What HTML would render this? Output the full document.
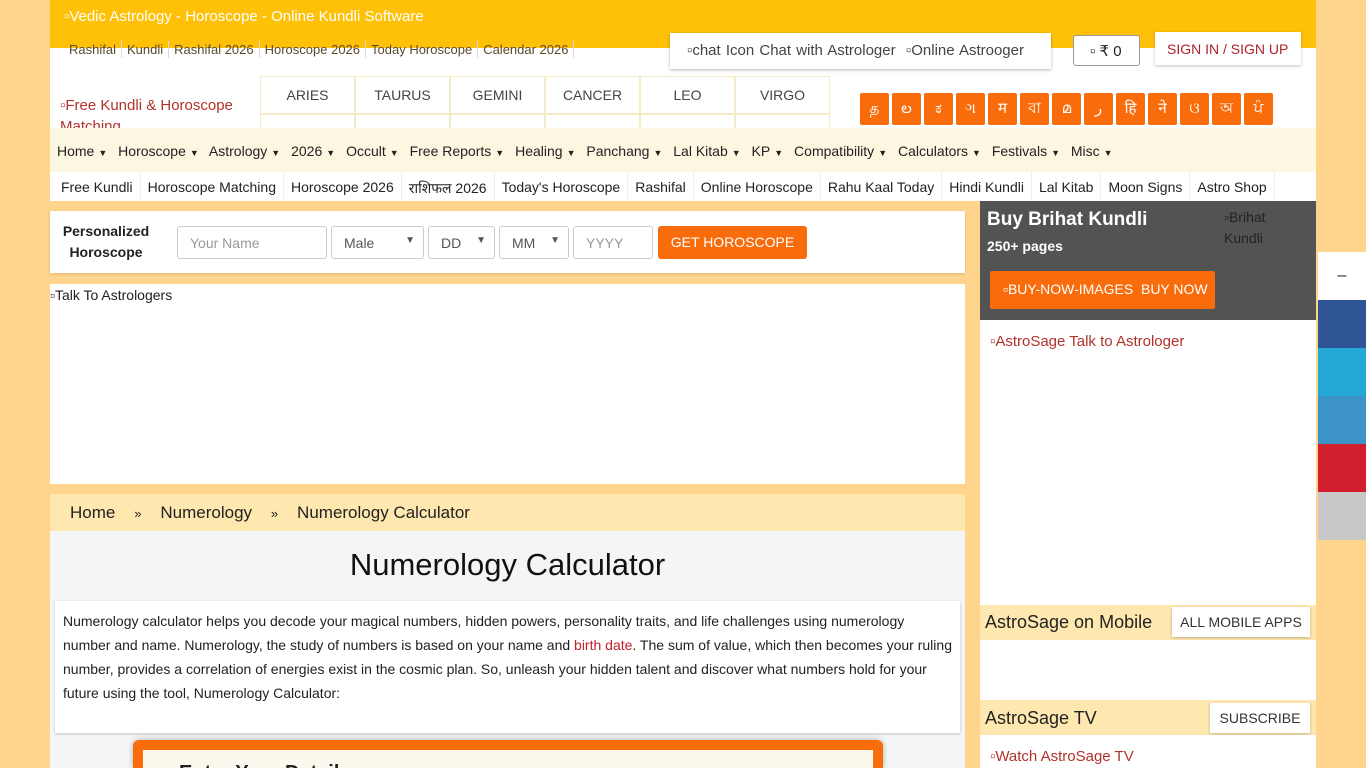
<!DOCTYPE html>
<html style="overflow:hidden;height:768px"><head><meta charset="utf-8"><style>
*{box-sizing:border-box;margin:0;padding:0}
body{width:1366px;height:768px;overflow:hidden;background:#ffd48c;font-family:"Liberation Sans","Noto Sans CJK SC",sans-serif;position:relative;color:#222}
.a{position:absolute}
.top{left:50px;top:0;width:1266px;height:48px;background:#ffc107}
.wh{left:50px;top:48px;width:1266px;height:80px;background:#fff}
.toplinks{left:64px;top:41px;font-size:13px;color:#5a4a2a;display:flex}
.toplinks span{padding:0 5px;border-right:1px solid #ddd;line-height:17px}
.chat{left:670px;top:33px;width:381px;height:36px;background:#fff;box-shadow:0 1px 3px rgba(0,0,0,.3);font-size:15px;color:#444;padding:9px 0 0 17px;white-space:nowrap;word-spacing:1px}
.wal{left:1073px;top:35px;width:67px;height:31px;border:1px solid #999;border-radius:3px;background:#fff;font-size:15px;padding:6px 0 0 16px}
.sign{left:1155px;top:32px;width:146px;height:33px;background:#fff;box-shadow:0 1px 3px rgba(0,0,0,.25);color:#b0222a;font-size:14px;padding:9px 0 0 12px}
.zod{left:260px;top:76px;width:570px;height:52px;overflow:hidden}
.zod div{float:left;width:95px;height:38px;border:1px solid #f4ecc6;text-align:center;line-height:37px;font-size:14px;color:#444}
.lang{top:93px;width:29px;height:32px;background:#f96c0c;border-radius:2px;color:#fff;text-align:center;line-height:32px;font-size:15px}
.nav{left:50px;top:128px;width:1266px;height:44px;background:#fdf6e0;font-size:14px;padding:15px 0 0 7px;white-space:nowrap;color:#222}
.nav span{margin-right:7px}
.nav i{font-style:normal;font-size:9px;margin-left:4px}
.nav2{left:50px;top:172px;width:1266px;height:29px;background:#fff;display:flex;font-size:14px;padding-left:4px}
.nav2 span{padding:7px 7px 0;border-right:1px solid #eee;white-space:nowrap}
.box{background:#fff}
.f{top:226px;height:33px;border:1px solid #ccc;border-radius:3px;background:#fff;font-size:14px;color:#999;padding:8px 0 0 12px}
</style></head><body>
<div class="a top"></div>
<div class="a wh"></div>
<div class="a" style="left:64px;top:8px;font-size:15px;color:#fff">▫Vedic Astrology - Horoscope - Online Kundli Software</div>
<div class="a toplinks"><span>Rashifal</span><span>Kundli</span><span>Rashifal 2026</span><span>Horoscope 2026</span><span>Today Horoscope</span><span>Calendar 2026</span></div>
<div class="a chat">▫chat Icon Chat with Astrologer &nbsp;▫Online Astrooger</div>
<div class="a wal">▫ ₹ 0</div>
<div class="a sign">SIGN IN / SIGN UP</div>
<div class="a" style="left:60px;top:95px;width:195px;height:33px;overflow:hidden;font-size:15px;color:#b0322a;line-height:21px">▫Free Kundli &amp; Horoscope Matching</div>
<div class="a zod"><div>ARIES</div><div>TAURUS</div><div>GEMINI</div><div>CANCER</div><div>LEO</div><div>VIRGO</div><div>LIBRA</div><div>SCORPIO</div><div>SAGITTARIUS</div><div>CAPRICORN</div><div>AQUARIUS</div><div>PISCES</div></div>
<div class="a lang" style="left:860px">த</div><div class="a lang" style="left:892px">ల</div><div class="a lang" style="left:924px">ಕ</div><div class="a lang" style="left:956px">ગ</div><div class="a lang" style="left:988px">म</div><div class="a lang" style="left:1020px">বা</div><div class="a lang" style="left:1052px">മ</div><div class="a lang" style="left:1084px">ر</div><div class="a lang" style="left:1116px">हि</div><div class="a lang" style="left:1148px">ने</div><div class="a lang" style="left:1180px">ଓ</div><div class="a lang" style="left:1212px">অ</div><div class="a lang" style="left:1244px">ਪੰ</div>
<div class="a nav"><span>Home<i>▼</i></span> <span>Horoscope<i>▼</i></span> <span>Astrology<i>▼</i></span> <span>2026<i>▼</i></span> <span>Occult<i>▼</i></span> <span>Free Reports<i>▼</i></span> <span>Healing<i>▼</i></span> <span>Panchang<i>▼</i></span> <span>Lal Kitab<i>▼</i></span> <span>KP<i>▼</i></span> <span>Compatibility<i>▼</i></span> <span>Calculators<i>▼</i></span> <span>Festivals<i>▼</i></span> <span>Misc<i>▼</i></span></div>
<div class="a nav2"><span>Free Kundli</span><span>Horoscope Matching</span><span>Horoscope 2026</span><span>राशिफल 2026</span><span>Today's Horoscope</span><span>Rashifal</span><span>Online Horoscope</span><span>Rahu Kaal Today</span><span>Hindi Kundli</span><span>Lal Kitab</span><span>Moon Signs</span><span>Astro Shop</span></div>
<div class="a box" style="left:50px;top:211px;width:915px;height:62px;box-shadow:0 1px 3px rgba(0,0,0,.15)"></div>
<div class="a" style="left:56px;top:221px;width:100px;text-align:center;font-size:14px;font-weight:bold;line-height:21px">Personalized Horoscope</div>
<div class="a f" style="left:177px;width:150px">Your Name</div>
<div class="a f" style="left:331px;width:93px;color:#555">Male<span style="float:right;margin-right:8px;font-size:10px">▼</span></div>
<div class="a f" style="left:428px;width:67px;color:#555">DD<span style="float:right;margin-right:8px;font-size:10px">▼</span></div>
<div class="a f" style="left:499px;width:70px;color:#555">MM<span style="float:right;margin-right:8px;font-size:10px">▼</span></div>
<div class="a f" style="left:573px;width:80px">YYYY</div>
<div class="a" style="left:658px;top:226px;width:149px;height:33px;background:#f96c0c;border-radius:3px;color:#fff;font-size:14px;text-align:center;line-height:33px">GET HOROSCOPE</div>
<div class="a box" style="left:50px;top:284px;width:915px;height:200px;font-size:14px;padding:3px 0 0 0">▫Talk To Astrologers</div>
<div class="a" style="left:50px;top:494px;width:915px;height:37px;background:#ffe8b0;font-size:17px;padding:9px 0 0 20px;white-space:nowrap">Home &nbsp; &nbsp;<span style="font-size:13px">»</span>&nbsp; &nbsp; Numerology &nbsp; &nbsp;<span style="font-size:13px">»</span>&nbsp; &nbsp; Numerology Calculator</div>
<div class="a" style="left:50px;top:531px;width:915px;height:237px;background:#f4f5f7"></div>
<div class="a" style="left:50px;top:547px;width:915px;text-align:center;font-size:31px;color:#111">Numerology Calculator</div>
<div class="a box" style="left:55px;top:601px;width:905px;height:132px;box-shadow:0 1px 3px rgba(0,0,0,.2);font-size:14px;line-height:24px;padding:8px 8px;color:#222">Numerology calculator helps you decode your magical numbers, hidden powers, personality traits, and life challenges using numerology number and name. Numerology, the study of numbers is based on your name and <span style="color:#c0202a">birth date</span>. The sum of value, which then becomes your ruling number, provides a correlation of energies exist in the cosmic plan. So, unleash your hidden talent and discover what numbers hold for your future using the tool, Numerology Calculator:</div>
<div class="a" style="left:133px;top:740px;width:750px;height:28px;background:#f96c0c;border-radius:6px 6px 0 0;box-shadow:0 0 6px rgba(0,0,0,.3)"></div>
<div class="a" style="left:143px;top:750px;width:730px;height:18px;background:#fdf8ee;font-size:20px;font-weight:bold;padding:12px 0 0 36px;overflow:hidden">Enter Your Details</div>
<div class="a" style="left:980px;top:201px;width:336px;height:119px;background:#535353"></div>
<div class="a" style="left:987px;top:209px;color:#fff;font-weight:bold;font-size:19px">Buy Brihat Kundli</div>
<div class="a" style="left:987px;top:238px;color:#fff;font-weight:bold;font-size:14px">250+ pages</div>
<div class="a" style="left:1224px;top:207px;width:80px;color:#222;font-size:14px;line-height:21px">▫Brihat Kundli</div>
<div class="a" style="left:990px;top:271px;width:225px;height:38px;background:#f96c0c;border-radius:2px;color:#fff;font-size:14px;padding:10px 0 0 13px;white-space:nowrap">▫BUY-NOW-IMAGES &nbsp;BUY NOW</div>
<div class="a box" style="left:980px;top:320px;width:336px;height:285px;font-size:15px;color:#b0322a;padding:13px 0 0 10px">▫AstroSage Talk to Astrologer</div>
<div class="a" style="left:980px;top:605px;width:336px;height:35px;background:#ffe8b0;font-size:18px;padding:7px 0 0 5px">AstroSage on Mobile</div>
<div class="a" style="left:1172px;top:607px;width:138px;height:30px;background:#fff;box-shadow:0 1px 3px rgba(0,0,0,.25);font-size:14px;color:#333;text-align:center;line-height:30px">ALL MOBILE APPS</div>
<div class="a box" style="left:980px;top:640px;width:336px;height:60px"></div>
<div class="a" style="left:980px;top:700px;width:336px;height:35px;background:#ffe8b0;font-size:18px;padding:8px 0 0 5px">AstroSage TV</div>
<div class="a" style="left:1210px;top:703px;width:100px;height:30px;background:#fff;box-shadow:0 1px 3px rgba(0,0,0,.25);font-size:14px;color:#333;text-align:center;line-height:30px">SUBSCRIBE</div>
<div class="a box" style="left:980px;top:735px;width:336px;height:33px;font-size:15px;color:#b0322a;padding:13px 0 0 10px;overflow:hidden">▫Watch AstroSage TV</div>
<div class="a" style="left:1318px;top:252px;width:48px;height:48px;background:#fff;text-align:center;line-height:48px">–</div>
<div class="a" style="left:1318px;top:300px;width:48px;height:48px;background:#2f5597"></div>
<div class="a" style="left:1318px;top:348px;width:48px;height:48px;background:#23a8d8"></div>
<div class="a" style="left:1318px;top:396px;width:48px;height:48px;background:#3b93c8"></div>
<div class="a" style="left:1318px;top:444px;width:48px;height:48px;background:#d21f2f"></div>
<div class="a" style="left:1318px;top:492px;width:48px;height:48px;background:#c8c8c8"></div>
</body></html>
